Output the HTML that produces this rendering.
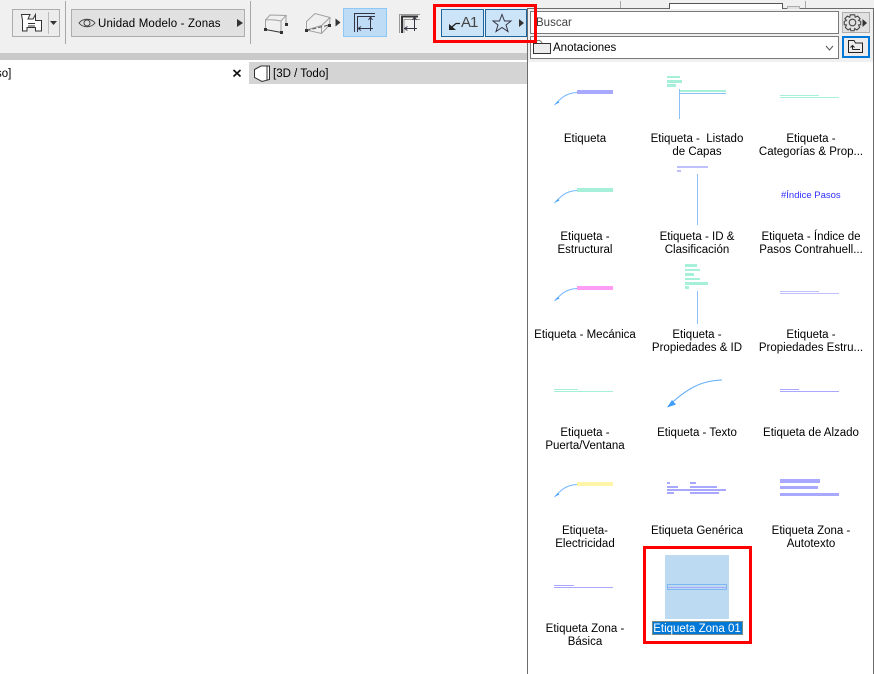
<!DOCTYPE html>
<html><head><meta charset="utf-8">
<style>
html,body{margin:0;padding:0;background:#fff}
body{width:874px;height:674px;position:relative;overflow:hidden;font-family:"Liberation Sans",sans-serif;font-size:11.5px;color:#000}
.a{position:absolute;box-sizing:border-box}
.l{position:absolute;width:112px;text-align:center;line-height:13px;white-space:nowrap;margin-top:1px}
svg{position:absolute;left:0;top:0}
</style></head><body>
<div class="a" style="left:0;top:0;width:874px;height:53px;background:#f0f0f0"></div>
<div class="a" style="left:0;top:53px;width:874px;height:7px;background:#c9c9c9"></div>
<div class="a" style="left:0;top:62px;width:249px;height:22px;background:#fff"></div>
<div class="a" style="left:249px;top:62px;width:278px;height:22px;background:#d4d4d4"></div>
<div class="a" style="left:12px;top:9px;width:48px;height:28px;background:#ececec;border:1px solid #adadad"></div>
<div class="a" style="left:71px;top:9px;width:174px;height:28px;background:#e1e1e1;border:1px solid #adadad"></div>
<div class="a" style="left:343px;top:8px;width:44px;height:29px;background:#bedcf5;border:1px solid #90c8f5"></div>
<div class="a" style="left:441px;top:9px;width:43px;height:28px;background:#cce4f7;border:1px solid #1a659f"></div>
<div class="a" style="left:485px;top:9px;width:42px;height:28px;background:#cce4f7;border:1px solid #1a659f"></div>
<div class="a" style="left:527px;top:8px;width:347px;height:666px;background:#fff;border:solid #6b6b6b;border-width:1px 1px 0 1px"></div>
<div class="a" style="left:528px;top:9px;width:345px;height:53px;background:#f0f0f0"></div>
<div class="a" style="left:530px;top:11px;width:309px;height:23px;background:#fff;border:1px solid #7a7a7a;line-height:23px;padding-left:5px;color:#444">Buscar</div>
<div class="a" style="left:530px;top:36px;width:309px;height:23px;background:#fff;border:1px solid #7a7a7a;line-height:23px;padding-left:22px">Anotaciones</div>
<div class="a" style="left:842px;top:12px;width:28px;height:21px;background:#e1e1e1;border:1px solid #adadad"></div>
<div class="a" style="left:842px;top:36px;width:28px;height:22px;background:#ececec;border:2px solid #0078d7"></div>
<div class="a" style="left:669px;top:3px;width:114px;height:6px;background:#fff;border:1px solid #555;border-bottom:0"></div>
<div class="a" style="left:787px;top:6px;width:13px;height:3px;background:#e1e1e1;border:1px solid #adadad;border-bottom:0"></div>
<div class="a" style="left:620px;top:1px;width:1px;height:7px;background:#a8a8a8"></div>
<div class="a" style="left:805px;top:1px;width:1px;height:7px;background:#a8a8a8"></div>

<div class="a" style="left:665px;top:555px;width:64px;height:64px;background:#bcdaf2"></div>

<svg width="874" height="674" viewBox="0 0 874 674" fill="none" shape-rendering="crispEdges">
<g fill="#a8a8a8"><rect x="65" y="1" width="1" height="43"/><rect x="250" y="1" width="1" height="43"/><rect x="48" y="12" width="1" height="22" fill="#bbb"/></g>
<g shape-rendering="auto">
<path d="M21.5 14.5H30L28 19H33L35.500 14.500V20.500H41.500V31H35.500V27.500H27V31H22.500V20L21.500 14.500Z" stroke="#333" fill="#fff"/>
<path d="M28 23.500H35M28 26H35" stroke="#333"/>
<path d="M50 21H57L53.500 25Z" fill="#333"/>
<path d="M79 23C83 18 91 18 95 23C91 28 83 28 79 23Z" stroke="#444"/><circle cx="87" cy="23" r="3" stroke="#444"/>
<path d="M237 19L243 23L237 27Z" fill="#333"/>
<!-- box 1 -->
<path d="M265.500 29V20L270 15L286 15.500L281 21C276 20 270 19.500 265.500 20M281 21V32M286 15.500V24" stroke="#a0a0a0"/>
<path d="M265.500 29.500L281.500 32.500" stroke="#333"/>
<rect x="264" y="28" width="3" height="3" fill="#333"/><rect x="280" y="31" width="3" height="3" fill="#333"/><rect x="285" y="23" width="3" height="3" fill="#333"/>
<!-- box 2 -->
<path d="M306.500 30V21.500L315 13.500L330 17.500L321.500 25.500ZM330 17.500L329.500 25L321.500 33.500L306.500 30M321.500 25.500V33.500" stroke="#a0a0a0"/>
<path d="M306.500 30.500L329 25" stroke="#555" stroke-dasharray="4 2"/>
<rect x="305" y="29" width="3" height="3" fill="#333"/><rect x="328" y="24" width="3" height="3" fill="#333"/>
<path d="M335.500 18.500L340.500 22.500L335.500 26.500Z" fill="#333"/>
<!-- dim active -->
<path d="M354.500 32V13.500H375M357.500 32V16.500H375" stroke="#334"/>
<path d="M357.500 28.500H373M358 28.500L361 26.500M358 28.500L361 30.500M370.500 17V31M368.500 20L370.500 17L372.500 20" stroke="#334"/>
<!-- dim 2 -->
<path d="M399.500 33V14.500H420" stroke="#999"/>
<path d="M402 33V16.500H418" stroke="#333" stroke-width="2"/>
<path d="M404 33V19.500H420" stroke="#999"/>
<path d="M404 28.500H417M404.500 28.500L407.500 26.500M404.500 28.500L407.500 30.500M414.500 17V31M412.500 20L414.500 17L416.500 20" stroke="#334"/>
<!-- A1 arrow -->
<path d="M449.500 29L456 23.500H460" stroke="#222" stroke-width="1.300"/><path d="M449 24V30H456Z" fill="#222"/>
<path d="M502 14.500L504.500 21H511L506 25L508 31.500L502 27.500L496 31.500L498 25L493 21H499.500Z" stroke="#334"/>
<path d="M519 19L524 23L519 27Z" fill="#333"/>
<!-- gear -->
<g transform="translate(852.500 22.500) scale(1.100)"><circle r="3" stroke="#444"/><path d="M-2-7H2L2.500-4.800L4.700-5.800L6.900-3.500L5.500-1.800L7.500-1V2L5.500 2.200L6.500 4.500L4 6.800L2 5.500L1.500 7.500H-1.500L-2 5.500L-4 6.800L-6.500 4.500L-5.500 2.200L-7.500 2V-1L-5.500-1.800L-6.900-3.500L-4.700-5.800L-2.500-4.800Z" stroke="#444"/></g>
<path d="M862.500 19L867 23L862.500 27Z" fill="#333"/>
<!-- folder up -->
<path d="M848.500 52.500V40.500H854L855.500 43H862.500V52.500Z" stroke="#222"/><path d="M852.500 49.500H860M852.500 49.500V45.500M850.500 47.500L852.500 45.500L854.500 47.500" stroke="#222"/>
<!-- annotation folder -->
<path d="M533.500 53.500V43.500H550.500V53.500Z" fill="#ececec" stroke="#333"/>
<path d="M536 43C536 40 540 39 542 43" stroke="#777"/>
<path d="M826 46L829.500 50L833 46" stroke="#555"/>
<!-- 3D view -->
<path d="M254.500 69.500L261 66H269.500V79.500L262 81.500L254.500 77.500Z" stroke="#333" fill="#fff"/><path d="M267 66V80" stroke="#333"/>
<path d="M233.500 70L240.500 76.500M240.500 70L233.500 76.500" stroke="#111" stroke-width="1.700"/>
</g>

<!-- leaders -->
<g stroke="#74b8ff" shape-rendering="auto">
<path d="M554.500 105C561 98 566 93 577 92.500"/>
<path d="M554.500 203C561 196 566 191 577 190.500"/>
<path d="M554.500 301C561 294 566 289 577 288.500"/>
<path d="M554.500 497C561 490 566 485 577 484.500"/>
<path d="M668 406.500C685 390 700 380.500 722 380" stroke="#62aefc"/>
<path d="M667 407.500L672 400L676 404.500Z" fill="#3f9dfa" stroke="none"/>
<path d="M555 104.500L558 101L559.500 102.500Z" fill="#3f9dfa" stroke="none"/>
<path d="M555 202.500L558 199L559.500 200.500Z" fill="#3f9dfa" stroke="none"/>
<path d="M555 300.500L558 297L559.500 298.500Z" fill="#3f9dfa" stroke="none"/>
<path d="M555 496.500L558 493L559.500 494.500Z" fill="#3f9dfa" stroke="none"/>
</g>
<rect x="577" y="90" width="36" height="4" fill="#a8a8ff"/>
<rect x="577" y="188" width="36" height="4" fill="#a6f0da"/>
<rect x="577" y="286" width="36" height="4" fill="#ff9cf5"/>
<rect x="577" y="482" width="36" height="4" fill="#fff5a8"/>
<g fill="#a6f0da">
<rect x="667" y="76" width="13" height="2"/><rect x="667" y="80" width="15" height="3"/><rect x="667" y="84" width="9" height="3"/>
<rect x="680" y="90" width="46" height="2"/>
<rect x="780" y="95" width="39" height="1"/><rect x="780" y="97" width="59" height="1"/>
<rect x="685" y="264" width="12" height="3"/><rect x="685" y="269" width="15" height="2"/><rect x="685" y="273" width="9" height="3"/><rect x="685" y="278" width="15" height="2"/><rect x="685" y="282" width="23" height="3"/><rect x="685" y="286" width="4" height="3"/>
<rect x="554" y="389" width="24" height="1"/><rect x="554" y="391" width="59" height="1"/>
</g>
<g fill="#8cc0f5">
<rect x="680" y="93" width="46" height="1"/><rect x="679" y="89" width="1" height="30"/>
<rect x="697" y="174" width="1" height="51"/><rect x="697" y="291" width="1" height="33"/>
</g>
<g fill="#c0c0ff">
<rect x="677" y="166" width="31" height="2"/><rect x="677" y="170" width="4" height="2"/>
<rect x="780" y="291" width="39" height="1"/><rect x="780" y="293" width="59" height="1"/>
</g>
<g fill="#a8a8ff">
<rect x="780" y="389" width="19" height="1"/><rect x="780" y="391" width="59" height="1"/>
<rect x="667" y="482" width="3" height="2"/><rect x="690" y="482" width="6" height="2"/><rect x="667" y="486" width="11" height="2"/><rect x="690" y="486" width="27" height="2"/><rect x="667" y="489" width="59" height="2"/><rect x="667" y="492" width="7" height="2"/><rect x="690" y="492" width="29" height="2"/>
<rect x="780" y="479" width="40" height="4"/><rect x="780" y="486" width="38" height="3"/><rect x="780" y="493" width="59" height="3"/>
<rect x="554" y="585" width="20" height="1"/><rect x="554" y="587" width="59" height="1"/>
<rect x="687" y="584" width="19" height="1"/><rect x="667" y="587" width="60" height="1"/>
</g>
<rect x="667.500" y="584.500" width="59" height="5" stroke="#7fb8f0"/>
<!-- red boxes -->
<rect x="434.500" y="5.500" width="101" height="36" stroke="#f00" stroke-width="3"/>
<rect x="644.500" y="547.500" width="106" height="95" stroke="#f00" stroke-width="3"/>
<!-- selected label -->
<rect x="652" y="621" width="91" height="14" fill="#0078d7"/>
<rect x="652.500" y="621.500" width="90" height="13" stroke="#f5a030" stroke-dasharray="1 1"/>
</svg>

<div class="a" style="left:98px;top:17px;line-height:14px;letter-spacing:.15px;white-space:nowrap">Unidad Modelo - Zonas</div>
<div class="a" style="left:-4px;top:67px;line-height:14px;white-space:nowrap">so]</div>
<div class="a" style="left:273px;top:67px;line-height:14px;white-space:nowrap">[3D / Todo]</div>
<div class="a" style="left:461px;top:13px;font-size:15px;line-height:20px;color:#444;letter-spacing:-1px;white-space:nowrap">A1</div>
<div class="a" style="left:781px;top:190px;font-size:9.5px;line-height:12px;color:#3030ff;white-space:nowrap">#Índice Pasos</div>

<div class="l" style="left:529px;top:132px">Etiqueta</div>
<div class="l" style="left:641px;top:132px">Etiqueta -&nbsp; Listado<br>de Capas</div>
<div class="l" style="left:755px;top:132px">Etiqueta -<br>Categorías &amp; Prop...</div>
<div class="l" style="left:529px;top:230px">Etiqueta -<br>Estructural</div>
<div class="l" style="left:641px;top:230px">Etiqueta - ID &amp;<br>Clasificación</div>
<div class="l" style="left:755px;top:230px">Etiqueta - Índice de<br>Pasos Contrahuell...</div>
<div class="l" style="left:529px;top:328px">Etiqueta - Mecánica</div>
<div class="l" style="left:641px;top:328px">Etiqueta -<br>Propiedades &amp; ID</div>
<div class="l" style="left:755px;top:328px">Etiqueta -<br>Propiedades Estru...</div>
<div class="l" style="left:529px;top:426px">Etiqueta -<br>Puerta/Ventana</div>
<div class="l" style="left:641px;top:426px">Etiqueta - Texto</div>
<div class="l" style="left:755px;top:426px">Etiqueta de Alzado</div>
<div class="l" style="left:529px;top:524px">Etiqueta-<br>Electricidad</div>
<div class="l" style="left:641px;top:524px">Etiqueta Genérica</div>
<div class="l" style="left:755px;top:524px">Etiqueta Zona -<br>Autotexto</div>
<div class="l" style="left:529px;top:622px">Etiqueta Zona -<br>Básica</div>
<div class="l" style="left:641px;top:622px;color:#fff">Etiqueta Zona 01</div>
</body></html>
